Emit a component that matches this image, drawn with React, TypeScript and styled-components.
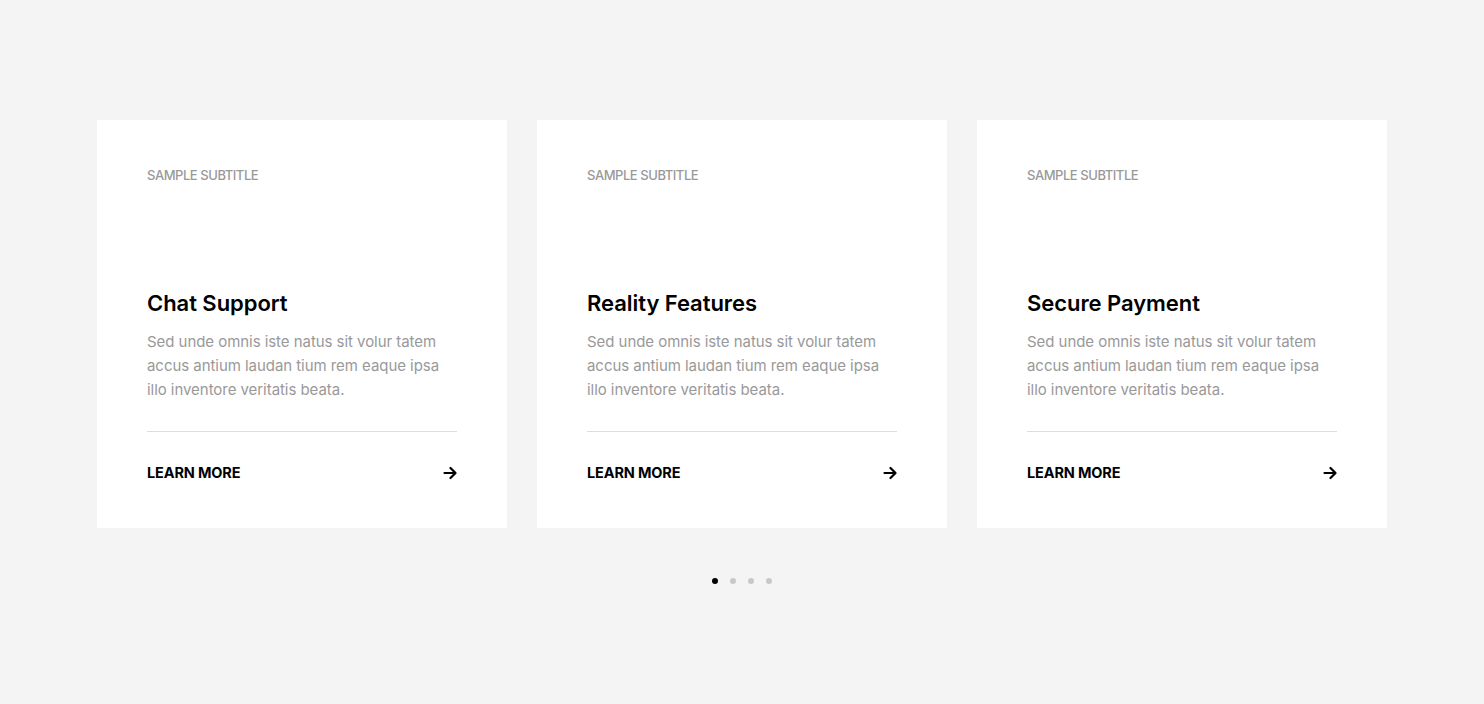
import React from "react";
import styled, { createGlobalStyle } from "styled-components";

const Global = createGlobalStyle`
  html, body { margin: 0; padding: 0; background: #f4f4f4; }
  body { font-family: Inter, "Noto Sans", sans-serif; -webkit-font-smoothing: antialiased; }
  * { box-sizing: border-box; }
`;

const Page = styled.main`
  min-height: 704px;
  padding-top: 120px;
  display: flex;
  flex-direction: column;
  align-items: center;
`;

const Row = styled.div`
  display: grid;
  grid-template-columns: repeat(3, 410px);
  gap: 30px;
`;

const Card = styled.article`
  background: #fff;
  height: 408px;
  padding: 47px 50px 0;
  display: flex;
  flex-direction: column;
`;

const Subtitle = styled.div`
  font-size: 13px;
  line-height: 16px;
  font-weight: 500;
  color: #999;
  text-transform: uppercase;
  letter-spacing: -0.45px;
`;

const Title = styled.h3`
  margin: 105px 0 0;
  font-size: 22px;
  line-height: 30px;
  font-weight: 600;
  color: #000;
  letter-spacing: -0.05px;
`;

const Text = styled.p`
  margin: 12px 0 0;
  font-size: 15px;
  line-height: 24px;
  color: #999;
  letter-spacing: -0.05px;
`;

const Divider = styled.hr`
  margin: 29px 0 0;
  border: 0;
  border-top: 1px solid #ddd;
`;

const More = styled.a`
  margin-top: 32px;
  display: flex;
  align-items: center;
  justify-content: space-between;
  font-size: 14.5px;
  line-height: 18px;
  font-weight: 700;
  color: #000;
  text-decoration: none;
  letter-spacing: -0.15px;
`;

const Dots = styled.div`
  margin-top: 50px;
  display: flex;
  gap: 12px;
`;

const Dot = styled.span<{ $active?: boolean }>`
  width: 6px;
  height: 6px;
  border-radius: 50%;
  background: ${(p) => (p.$active ? "#000" : "#c8c8c8")};
`;

const Arrow = () => (
  <svg width="14" height="14" viewBox="0 0 14 14" fill="none" stroke="#000" strokeWidth="2.2" strokeLinecap="round" strokeLinejoin="round">
    <path d="M1.5 7h11M7.5 2l5 5-5 5" />
  </svg>
);

const cards = ["Chat Support", "Reality Features", "Secure Payment"];

export default function App() {
  return (
    <>
      <Global />
      <Page>
        <Row>
          {cards.map((t) => (
            <Card key={t}>
              <Subtitle>Sample Subtitle</Subtitle>
              <Title>{t}</Title>
              <Text>
                Sed unde omnis iste natus sit volur tatem accus antium laudan tium rem eaque ipsa illo inventore veritatis beata.
              </Text>
              <Divider />
              <More href="#">
                LEARN MORE
                <Arrow />
              </More>
            </Card>
          ))}
        </Row>
        <Dots>
          <Dot $active />
          <Dot />
          <Dot />
          <Dot />
        </Dots>
      </Page>
    </>
  );
}
